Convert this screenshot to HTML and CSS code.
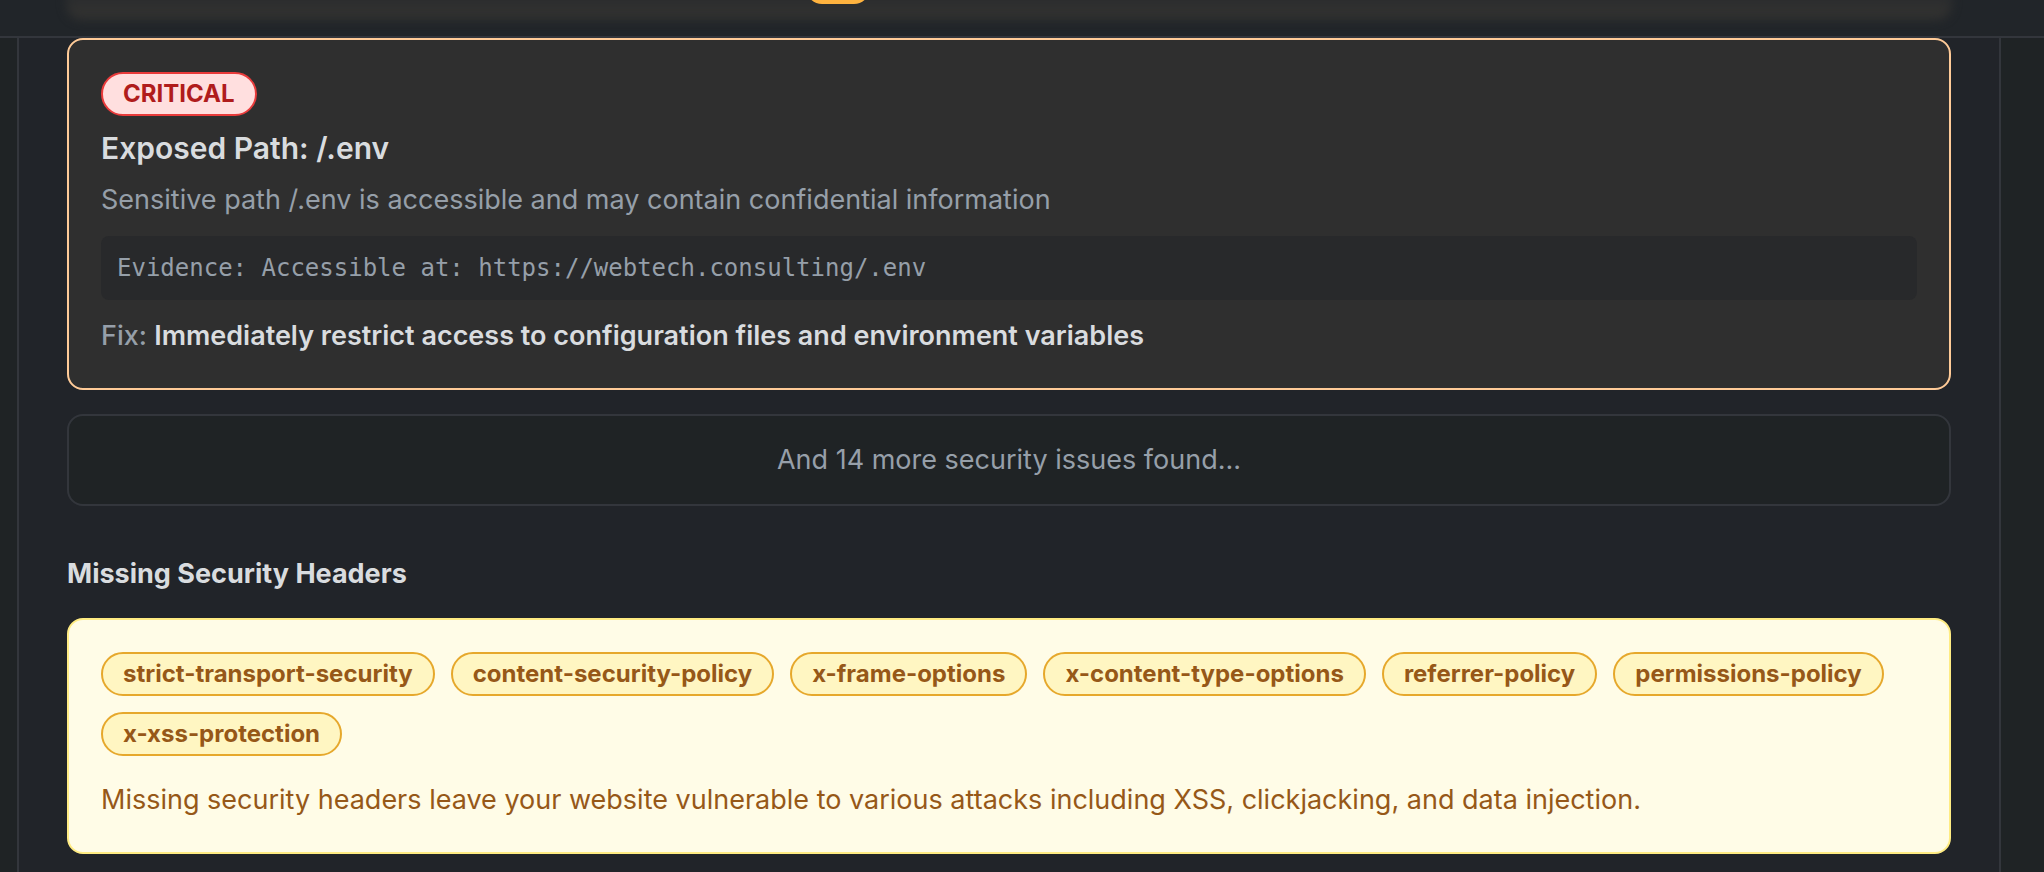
FILE: index.html
```html
<!DOCTYPE html>
<html lang="en">
<head>
<meta charset="utf-8">
<meta name="viewport" content="width=device-width, initial-scale=1">
<title>Security report</title>
<link rel="stylesheet" href="styles.css">
</head>
<body>
<header class="topbar">
  <div class="topbar-glow"></div>
  <span class="topbar-pill"></span>
</header>
<main class="report">
  <article class="issue">
    <span class="badge badge-critical">CRITICAL</span>
    <h3 class="issue-title">Exposed Path: /.env</h3>
    <p class="issue-text">Sensitive path /.env is accessible and may contain confidential information</p>
    <code class="evidence">Evidence: Accessible at: https://webtech.consulting/.env</code>
    <p class="issue-fix">Fix: <strong>Immediately restrict access to configuration files and environment variables</strong></p>
  </article>
  <p class="more">And 14 more security issues found...</p>
  <h4 class="section-title">Missing Security Headers</h4>
  <section class="headers-panel">
    <ul class="chips">
      <li class="badge badge-header">strict-transport-security</li>
      <li class="badge badge-header">content-security-policy</li>
      <li class="badge badge-header">x-frame-options</li>
      <li class="badge badge-header">x-content-type-options</li>
      <li class="badge badge-header">referrer-policy</li>
      <li class="badge badge-header">permissions-policy</li>
      <li class="badge badge-header">x-xss-protection</li>
    </ul>
    <p class="headers-note">Missing security headers leave your website vulnerable to various attacks including XSS, clickjacking, and data injection.</p>
  </section>
</main>
</body>
</html>
```

FILE: styles.css
```css
* {
  box-sizing: border-box;
  margin: 0;
  padding: 0;
}

body {
  min-height: 100vh;
  display: flex;
  flex-direction: column;
  background: #1f2325;
  color: #d9dcdf;
  font-family: Inter, "Liberation Sans", sans-serif;
  font-size: 27px;
  line-height: 40px;
}

.topbar {
  position: relative;
  height: 38px;
  overflow: hidden;
  background: #212529;
  border-bottom: 2px solid #33363c;
}

.topbar-glow {
  height: 40px;
  margin: -20px 92px 0 66px;
  border-radius: 0 0 16px 16px;
  background: linear-gradient(#2b2c2e 20px, #313130 30px);
  filter: blur(5px);
}

.topbar-pill {
  position: absolute;
  top: -28px;
  left: 41%;
  width: 64px;
  height: 32px;
  margin-left: -32px;
  border-radius: 16px;
  background: #ffb33f;
}

.report {
  flex: 1;
  margin: 0 43px 0 17px;
  padding: 0 48px 16px;
  border: solid #33363c;
  border-width: 0 2px;
  background: #212429;
}

.issue {
  display: flex;
  flex-direction: column;
  align-items: flex-start;
  padding: 32px;
  border: 2px solid #ffcb98;
  border-radius: 16px;
  background: #2f2f2f;
}

.badge {
  padding: 4px 20px;
  border: 2px solid;
  border-radius: 22px;
  font-size: 24px;
  font-weight: 700;
  line-height: 32px;
}

.badge-critical {
  border-color: #e93b3b;
  background: #ffdfdf;
  color: #b01c1c;
}

.issue-title {
  margin: 8px 0;
  font-size: 30px;
  font-weight: 600;
  line-height: 48px;
}

.issue-text {
  color: #969fa9;
}

.evidence {
  align-self: stretch;
  margin: 16px 0;
  padding: 16px;
  border-radius: 8px;
  background: #28292b;
  color: #969fa9;
  font-family: "DejaVu Sans Mono", monospace;
  font-size: 24px;
  line-height: 32px;
}

.issue-fix {
  color: #969fa9;
  font-weight: 500;
}

.issue-fix strong {
  color: #d9dcdf;
  font-weight: 600;
}

.more {
  margin-top: 24px;
  padding: 24px;
  border: 2px solid #33363c;
  border-radius: 16px;
  background: #1f2325;
  color: #969fa9;
  text-align: center;
}

.section-title {
  margin: 48px 0 24px;
  font-size: 27px;
  font-weight: 700;
}

.headers-panel {
  padding: 32px;
  border: 2px solid #ffec83;
  border-radius: 16px;
  background: #fffce7;
  color: #965818;
}

.chips {
  display: flex;
  flex-wrap: wrap;
  gap: 16px;
  margin-bottom: 24px;
  list-style: none;
}

.badge-header {
  border-color: #e6a82c;
  background: #fff6c2;
}
```
